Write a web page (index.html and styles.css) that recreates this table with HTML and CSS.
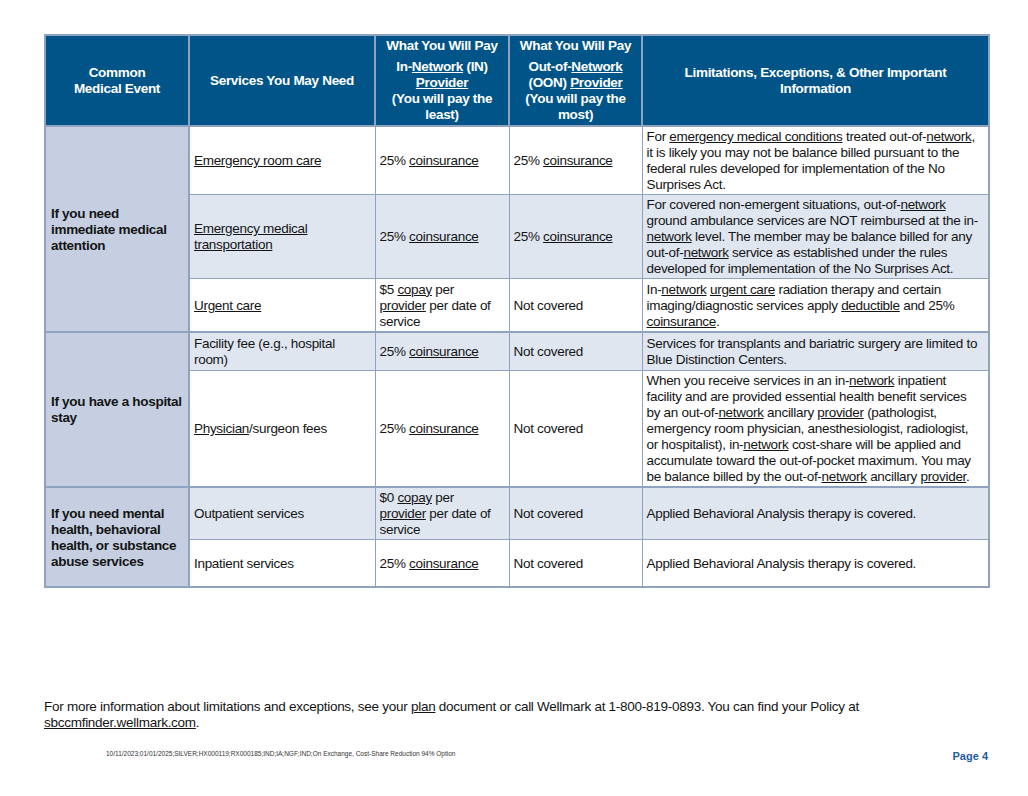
FILE: index.html
```html
<!DOCTYPE html>
<html>
<head>
<meta charset="utf-8">
<link rel="stylesheet" href="styles.css">
</head>
<body>
<div class="page">
  <table class="sbc">
    <colgroup>
      <col class="c1"><col class="c2"><col class="c3"><col class="c4"><col class="c5">
    </colgroup>
    <thead>
      <tr>
        <th>Common<br>Medical Event</th>
        <th>Services You May Need</th>
        <th><span class="pay">What You Will Pay</span>In-<u>Network</u> (IN)<br><u>Provider</u><br>(You will pay the<br>least)</th>
        <th><span class="pay">What You Will Pay</span>Out-of-<u>Network</u><br>(OON) <u>Provider</u><br>(You will pay the<br>most)</th>
        <th>Limitations, Exceptions, &amp; Other Important<br>Information</th>
      </tr>
    </thead>
    <tbody>
      <tr class="r-er">
        <td class="ev" rowspan="3">If you need<br>immediate medical<br>attention</td>
        <td><u>Emergency room care</u></td>
        <td>25% <u>coinsurance</u></td>
        <td>25% <u>coinsurance</u></td>
        <td>For <u>emergency medical conditions</u> treated out-of-<u>network</u>,<br>it is likely you may not be balance billed pursuant to the<br>federal rules developed for implementation of the No<br>Surprises Act.</td>
      </tr>
      <tr class="alt">
        <td><u>Emergency medical<br>transportation</u></td>
        <td>25% <u>coinsurance</u></td>
        <td>25% <u>coinsurance</u></td>
        <td>For covered non-emergent situations, out-of-<u>network</u><br>ground ambulance services are NOT reimbursed at the in-<br><u>network</u> level. The member may be balance billed for any<br>out-of-<u>network</u> service as established under the rules<br>developed for implementation of the No Surprises Act.</td>
      </tr>
      <tr class="r-uc">
        <td><u>Urgent care</u></td>
        <td>$5 <u>copay</u> per<br><u>provider</u> per date of<br>service</td>
        <td>Not covered</td>
        <td>In-<u>network</u> <u>urgent care</u> radiation therapy and certain<br>imaging/diagnostic services apply <u>deductible</u> and 25%<br><u>coinsurance</u>.</td>
      </tr>
      <tr class="alt sec r-ff">
        <td class="ev" rowspan="2">If you have a hospital<br>stay</td>
        <td>Facility fee (e.g., hospital<br>room)</td>
        <td>25% <u>coinsurance</u></td>
        <td>Not covered</td>
        <td>Services for transplants and bariatric surgery are limited to<br>Blue Distinction Centers.</td>
      </tr>
      <tr>
        <td><u>Physician</u>/surgeon fees</td>
        <td>25% <u>coinsurance</u></td>
        <td>Not covered</td>
        <td>When you receive services in an in-<u>network</u> inpatient<br>facility and are provided essential health benefit services<br>by an out-of-<u>network</u> ancillary <u>provider</u> (pathologist,<br>emergency room physician, anesthesiologist, radiologist,<br>or hospitalist), in-<u>network</u> cost-share will be applied and<br>accumulate toward the out-of-pocket maximum. You may<br>be balance billed by the out-of-<u>network</u> ancillary <u>provider</u>.</td>
      </tr>
      <tr class="alt sec">
        <td class="ev" rowspan="2">If you need mental<br>health, behavioral<br>health, or substance<br>abuse services</td>
        <td>Outpatient services</td>
        <td>$0 <u>copay</u> per<br><u>provider</u> per date of<br>service</td>
        <td>Not covered</td>
        <td>Applied Behavioral Analysis therapy is covered.</td>
      </tr>
      <tr class="last">
        <td>Inpatient services</td>
        <td>25% <u>coinsurance</u></td>
        <td>Not covered</td>
        <td>Applied Behavioral Analysis therapy is covered.</td>
      </tr>
    </tbody>
  </table>

  <div class="footer">
    <p class="more">For more information about limitations and exceptions, see your <u>plan</u> document or call Wellmark at 1-800-819-0893. You can find your Policy at<br><u>sbccmfinder.wellmark.com</u>.</p>
    <div class="meta">
      <span class="code">10/11/2023;01/01/2025;SILVER;HX000119;RX000185;IND;IA;NGF;IND;On Exchange, Cost-Share Reduction 94% Option</span>
      <span class="pageno">Page 4</span>
    </div>
  </div>
</div>
</body>
</html>
```

FILE: styles.css
```css
html, body {
  margin: 0;
  padding: 0;
  background: #ffffff;
}

body {
  font-family: "Liberation Sans", Arial, sans-serif;
  color: #141414;
}

.page {
  width: 1028px;
  height: 796px;
  padding: 34px 40px 0 44px;
  box-sizing: border-box;
}

.sbc {
  border-collapse: collapse;
  table-layout: fixed;
  width: 944px;
  font-size: 13.5px;
  letter-spacing: -0.3px;
  line-height: 16px;
  border: 2px solid #8fa2c0;
}

.c1 { width: 144px; }
.c2 { width: 186px; }
.c3 { width: 134px; }
.c4 { width: 133px; }
.c5 { width: 347px; }

.sbc th {
  background: #005487;
  color: #ffffff;
  font-weight: bold;
  text-align: center;
  vertical-align: middle;
  border: 2px solid #8fa2c0;
  padding: 2px 3px;
  height: 82px;
  line-height: 16px;
  white-space: nowrap;
}

.sbc th .pay {
  display: block;
  margin-bottom: 5px;
}

.sbc td {
  border: 1px solid #8fa2c0;
  padding: 2px 4px 1px 4px;
  vertical-align: middle;
  text-align: left;
  background: #ffffff;
  white-space: nowrap;
}

.sbc tr.alt td {
  background: #dfe6f0;
}

.sbc td.ev,
.sbc tr.alt td.ev {
  background: #c5cfe1;
  font-weight: bold;
  border-right: 2px solid #8fa2c0;
  padding-left: 5px;
}

.sbc tr.sec td {
  border-top: 2px solid #8fa2c0;
}

.sbc tr.r-er td {
  height: 64px;
}

.sbc tr.r-uc td {
  height: 49px;
}

.sbc tr.r-ff td {
  height: 34px;
}

.sbc tr.last td {
  height: 43px;
}

.sbc u {
  text-decoration: underline;
  text-underline-offset: 1px;
}

.footer {
  margin-top: 111px;
}

.more {
  margin: 0;
  font-size: 13.5px;
  letter-spacing: -0.27px;
  line-height: 16px;
}

.meta {
  display: flex;
  justify-content: space-between;
  align-items: flex-start;
  margin-top: 18px;
  padding-left: 62px;
}

.code {
  font-size: 6.5px;
  line-height: 9px;
  color: #333333;
}

.pageno {
  font-size: 11px;
  line-height: 13px;
  font-weight: bold;
  color: #1f5c9e;
  margin-top: 1px;
}
```
